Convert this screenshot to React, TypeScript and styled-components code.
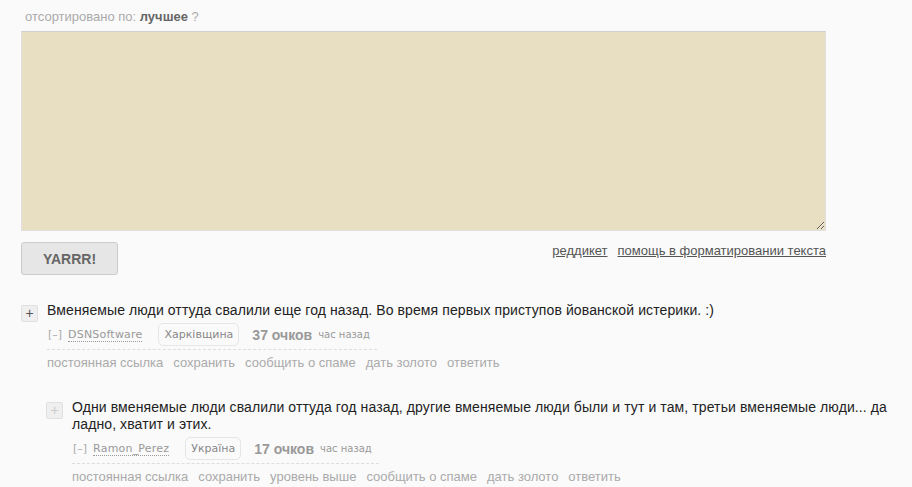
import React from "react";
import styled, { createGlobalStyle } from "styled-components";

const Global = createGlobalStyle`
  html, body { margin: 0; padding: 0; background: #fafafa; }
  body { font-family: "Liberation Sans", Arial, sans-serif; }
`;

const Page = styled.div`
  padding: 9px 0 0 21px;
  width: 880px;
`;

const SortLine = styled.div`
  font-size: 13px;
  color: #aaa;
  padding-left: 4px;
  height: 22px;
  b { color: #666; font-weight: bold; }
`;

const TextArea = styled.textarea`
  display: block;
  box-sizing: border-box;
  width: 805px;
  height: 200px;
  background: #e8dfc3;
  border: 1px solid #e0e0e0;
  border-top-color: #cfcfcf;
  margin: 0;
  resize: both;
  outline: none;
`;

const FormBottom = styled.div`
  display: flex;
  justify-content: space-between;
  align-items: flex-start;
  width: 805px;
  margin-top: 11px;
`;

const Button = styled.button`
  width: 97px;
  height: 33px;
  background: #e6e6e6;
  border: 1px solid #ccc;
  border-radius: 3px;
  font-family: "Liberation Sans", Arial, sans-serif;
  font-size: 14px;
  font-weight: bold;
  color: #666;
  padding: 0;
`;

const Links = styled.div`
  display: flex;
  gap: 10px;
  font-size: 13px;
  margin-top: 1px;
  a { color: #555; text-decoration: underline; }
`;

const Comments = styled.div`
  margin-top: 27px;
`;

const Comment = styled.div<{ $indent?: number }>`
  display: flex;
  align-items: flex-start;
  margin-left: ${(p) => p.$indent ?? 0}px;
  margin-bottom: 29px;
  &:last-child { margin-bottom: 0; }
`;

const Expand = styled.div<{ $faded?: boolean }>`
  flex: none;
  box-sizing: border-box;
  width: 17px;
  height: 17px;
  border: 1px solid #e0e0e0;
  border-radius: 2px;
  background: #efefef;
  color: ${(p) => (p.$faded ? "#ccc" : "#555")};
  font-size: 14px;
  line-height: 14px;
  text-align: center;
  margin-top: 3px;
  margin-right: 9px;
`;

const Entry = styled.div`
  flex: 1;
  min-width: 0;
`;

const Body = styled.p`
  margin: 0;
  font-size: 14px;
  letter-spacing: 0.1px;
  line-height: 17px;
  color: #222;
  max-width: 830px;
`;

const Tagline = styled.div`
  display: inline-flex;
  align-items: center;
  height: 27px;
  padding: 0 7px 1px 1px;
  margin-top: 2px;
  border-bottom: 1px dashed #ddd;
  font-size: 11px;
  color: #999;
`;

const Toggle = styled.span`
  font-family: "DejaVu Sans", Verdana, sans-serif;
  font-size: 11px;
  color: #aaa;
  margin-right: 6px;
`;

const Author = styled.a`
  font-family: "DejaVu Sans", Verdana, sans-serif;
  font-size: 11px;
  letter-spacing: 0.2px;
  color: #999;
  text-decoration: none;
  border-bottom: 1px dotted #999;
  margin-right: 16px;
`;

const Flair = styled.span`
  font-family: "DejaVu Sans", Verdana, sans-serif;
  font-size: 11px;
  color: #888;
  border: 1px solid #e6e6e6;
  border-radius: 5px;
  padding: 4px 5px;
  margin-right: 13px;
`;

const Score = styled.span`
  font-size: 14px;
  font-weight: bold;
  color: #999;
  margin-right: 6px;
`;

const Time = styled.span`
  font-family: "DejaVu Sans", Verdana, sans-serif;
  font-size: 10px;
  color: #999;
`;

const Buttons = styled.ul`
  list-style: none;
  margin: 5px 0 0;
  padding: 0;
  display: flex;
  gap: 10px;
  font-size: 13px;
  color: #aaa;
`;

type C = {
  indent: number;
  faded?: boolean;
  text: string;
  author: string;
  flair: string;
  score: string;
  buttons: string[];
};

const comments: C[] = [
  {
    indent: 0,
    text: "Вменяемые люди оттуда свалили еще год назад. Во время первых приступов йованской истерики. :)",
    author: "DSNSoftware",
    flair: "Харківщина",
    score: "37 очков",
    buttons: ["постоянная ссылка", "сохранить", "сообщить о спаме", "дать золото", "ответить"],
  },
  {
    indent: 25,
    faded: true,
    text: "Одни вменяемые люди свалили оттуда год назад, другие вменяемые люди были и тут и там, третьи вменяемые люди... да ладно, хватит и этих.",
    author: "Ramon_Perez",
    flair: "Україна",
    score: "17 очков",
    buttons: ["постоянная ссылка", "сохранить", "уровень выше", "сообщить о спаме", "дать золото", "ответить"],
  },
];

export default function App() {
  return (
    <Page>
      <Global />
      <SortLine>
        отсортировано по: <b>лучшее</b> ?
      </SortLine>
      <TextArea />
      <FormBottom>
        <Button>YARRR!</Button>
        <Links>
          <a>реддикет</a>
          <a>помощь в форматировании текста</a>
        </Links>
      </FormBottom>
      <Comments>
        {comments.map((c) => (
          <Comment key={c.author} $indent={c.indent}>
            <Expand $faded={c.faded}>+</Expand>
            <Entry>
              <Body>{c.text}</Body>
              <Tagline>
                <Toggle>[–]</Toggle>
                <Author>{c.author}</Author>
                <Flair>{c.flair}</Flair>
                <Score>{c.score}</Score>
                <Time>час назад</Time>
              </Tagline>
              <Buttons>
                {c.buttons.map((b) => (
                  <li key={b}>{b}</li>
                ))}
              </Buttons>
            </Entry>
          </Comment>
        ))}
      </Comments>
    </Page>
  );
}
